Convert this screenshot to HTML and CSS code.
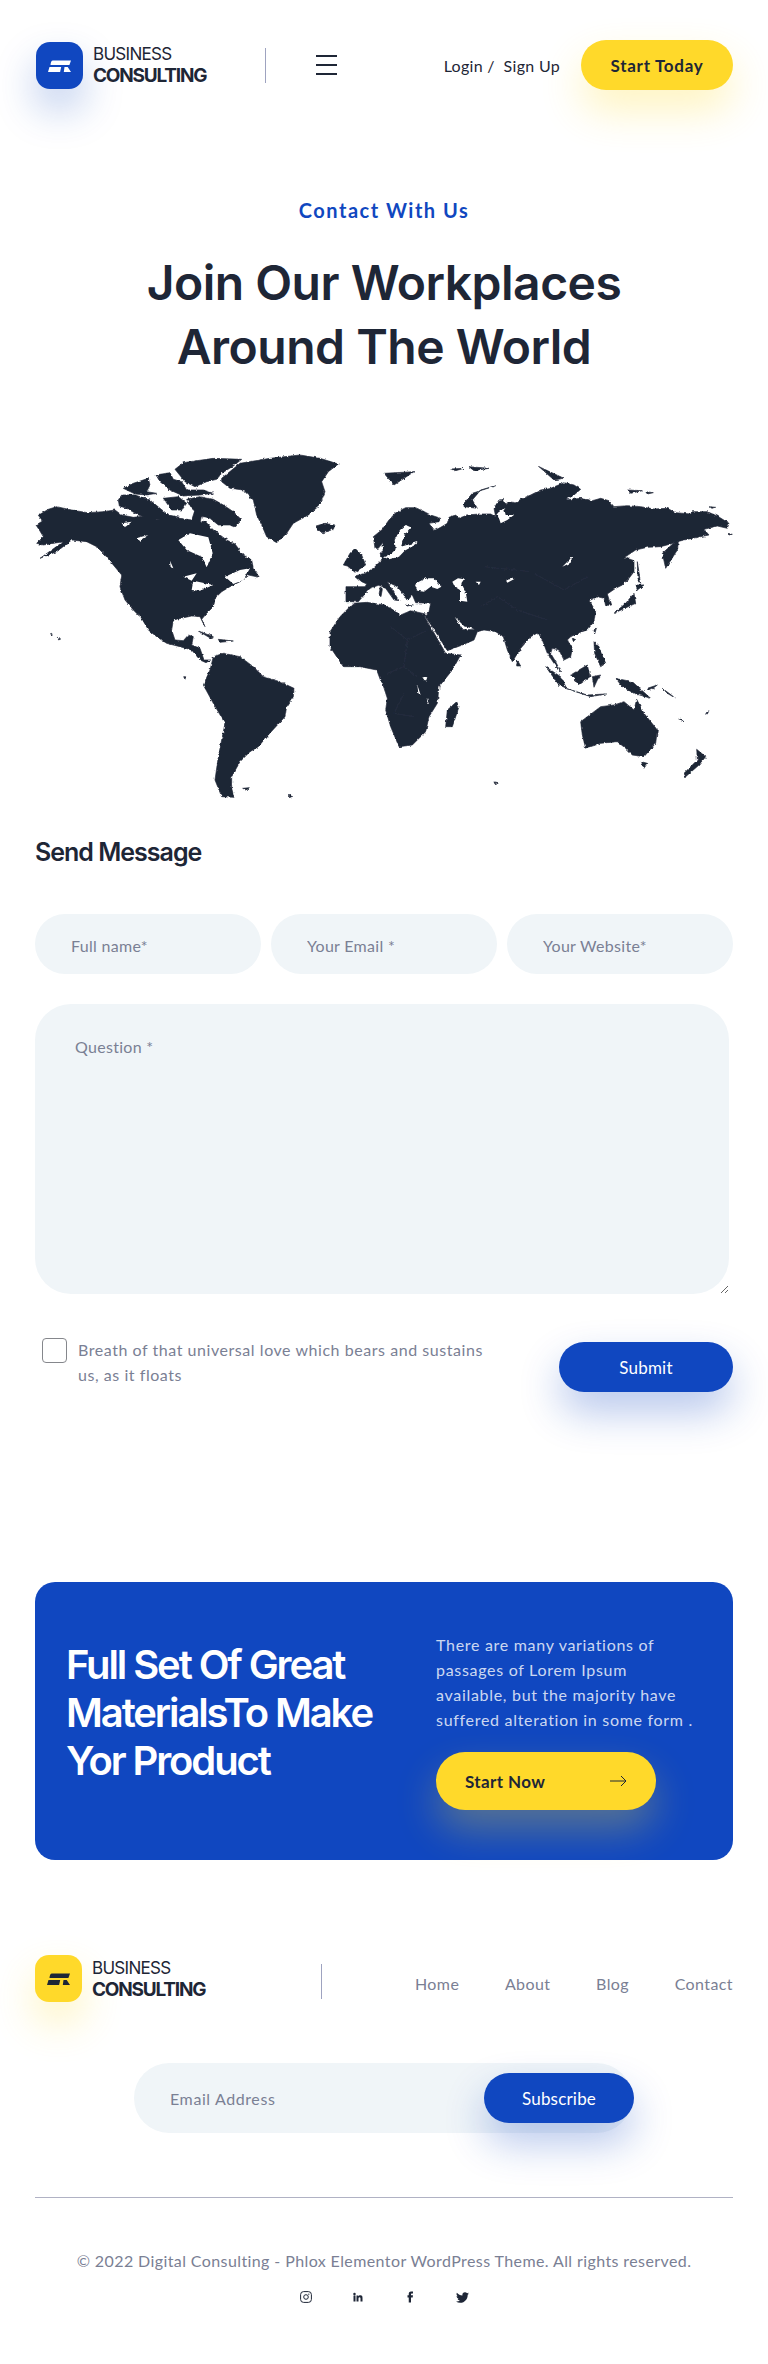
FILE: index.html
```html
<!DOCTYPE html>
<html lang="en">
<head>
  <meta charset="UTF-8" />
  <title>Business Consulting - Contact</title>
  <link rel="stylesheet" href="styles.css">
</head>
<body>

<header class="top-bar">
  <a class="brand" href="#">
    <span class="brand-icon">
      <svg width="47" height="47" viewBox="0 0 47 47"><path d="M17 18.500h18l-1.600 4.600H14.500c.2-2.600.8-4.600 2.500-4.600zM13.500 25h11.700l-1.100 5H12zM28.500 25h3.200l3.300 5h-7.200z" fill="#fff"/></svg>
    </span>
    <span class="brand-text"><span class="brand-top">BUSINESS</span><span class="brand-bottom">CONSULTING</span></span>
  </a>
  <span class="divider"></span>
  <button class="menu-btn" aria-label="Menu"><span></span><span></span><span></span></button>
  <div class="top-links">Login /&nbsp; Sign Up</div>
  <a class="btn btn-yellow btn-top" href="#">Start Today</a>
</header>

<main class="page">
  <p class="eyebrow">Contact With Us</p>
  <h1 class="title">Join Our Workplaces<br>Around The World</h1>

  <svg class="world-map" viewBox="35 452 698 350" aria-label="World map">
    <defs>
      <filter id="coast" filterUnits="userSpaceOnUse" x="30" y="446" width="708" height="362">
        <feTurbulence type="fractalNoise" baseFrequency="0.3" numOctaves="2" seed="4"/>
        <feDisplacementMap in="SourceGraphic" scale="3" xChannelSelector="R" yChannelSelector="G"/>
        <feGaussianBlur stdDeviation="0.4"/>
      </filter>
    </defs>
    <g filter="url(#coast)">
    <g transform="translate(0 440) scale(.33333)">
      <g class="land">
        <path d="M108 255L128 243 115 226 145 208 170 200 215 210 262 218 310 215 345 210 365 225 400 232 455 226 470 240 510 228 540 235 575 240 585 210 605 225 600 250 612 240 640 270 680 300 705 312 730 345 755 360 760 385 778 412 745 405 720 425 690 440 665 455 645 475 640 500 620 520 605 538 615 560 600 530 575 528 520 540 515 570 525 600 550 602 565 585 580 590 575 615 600 625 612 660 632 660 618 668 600 660 575 630 540 620 500 610 470 590 445 570 420 530 400 510 375 480 360 440 365 405 340 375 315 345 290 320 260 305 215 300 170 335 120 355 155 330 190 305 130 315 110 310 130 290 118 270z"/>
        <path d="M525 88L550 68 640 55 725 58 700 78 665 100 650 118 620 125 585 140 555 125zM468 105L510 98 520 118 545 125 560 150 610 150 640 160 600 165 550 168 510 150 480 125zM370 145L400 130 445 115 450 135 440 155 470 160 440 165 405 162zM355 180L365 165 405 165 450 180 480 205 505 225 540 232 500 240 455 238 415 225 380 205 358 198zM490 175L535 170 560 190 545 210 515 210zM560 178L600 170 640 178 670 195 700 215 725 240 705 262 690 255 655 255 630 235 600 228 575 205zM575 255L610 250 625 270 590 280z"/>
        <path d="M665 115L720 70 810 55 900 45 960 55 1015 72 985 95 965 125 975 155 960 195 925 225 880 250 860 280 830 308 800 290 785 255 770 225 760 180 730 150 690 145 665 125zM948 258L975 250 1005 255 1000 268 970 278 955 272z"/>
        <path d="M640 650L670 640 720 650 760 680 790 710 840 725 882 745 880 770 860 800 855 830 800 890 775 920 750 935 720 965 695 1010 695 1045 702 1072 665 1070 645 1020 655 950 675 850 640 790 610 735 630 690z"/>
        <path d="M595 573L640 590 632 595zM655 598L700 603 660 607zM728 1045L748 1043 740 1050zM865 1065L878 1070 870 1072zM551 710L557 710 555 718zM172 592L182 597 176 600zM152 580L157 582 154 585z"/>
        <path d="M1030 375L1050 340 1065 325 1085 345 1097 375 1065 397 1042 378zM1120 290L1155 262 1155 300 1135 325 1125 325zM1155 335L1140 340 1145 360 1120 385 1095 400 1065 408 1085 425 1100 432 1095 440 1038 440 1038 485 1075 485 1095 462 1110 445 1135 436 1155 442zM1140 445L1147 448 1143 470 1137 465zM1060 490L1100 487 1155 495 1155 735 1145 730 1130 690 1080 680 1030 680 990 620 990 575 1020 530z"/>
      </g>
      <g class="sea">
        <path d="M535 300L570 280 625 292 638 340 620 382 605 350 560 330zM550 410L590 400 575 422zM580 422L640 435 600 452 575 450zM675 410L720 390 750 385 730 420 700 432zM510 362L520 385 512 382zM408 295L445 285 418 302zM365 250L395 245 375 262zM415 520L445 572 425 545z"/>
      </g>
    </g>
    <g transform="translate(384 440) scale(.33333)">
      <g class="land">
        <path d="M-3 265L15 240 35 218 65 203 95 203 115 212 140 225 170 235 165 245 135 250 150 272 170 262 190 250 195 232 215 225 225 235 250 225 285 222 320 222 335 230 330 205 345 180 358 178 365 195 372 185 395 188 410 178 440 165 470 150 500 145 540 128 570 135 590 148 570 165 545 180 590 175 625 182 650 175 675 182 690 200 730 197 770 200 810 207 850 205 875 218 920 222 925 215 970 215 1000 228 1035 250 1030 265 1000 258 985 262 960 268 975 285 940 292 900 300 880 305 860 312 830 320 790 322 755 330 722 352 750 362 750 395 735 415 715 435 695 445 670 462 680 495 665 497 660 475 640 470 620 480 615 482 635 512 630 545 610 570 585 578 560 590 550 600 565 625 560 650 540 660 525 630 505 625 500 640 515 665 530 695 510 670 490 640 475 600 462 578 440 590 410 625 385 665 370 630 358 590 335 575 300 570 280 575 270 600 235 615 190 632 170 600 145 560 122 528 135 515 140 490 95 488 85 465 70 482 58 462 40 440 10 425 45 482 30 480 5 445-3 442z"/>
        <path d="M-3 495L20 505 50 525 80 512 125 522 122 530 145 570 185 640 230 645 205 690 165 740 160 790 135 830 125 875 85 915 45 920 20 860 5 810 10 775-3 735zM218 785L225 800 205 860 185 860 190 810z"/>
        <path d="M240 190L265 160 335 137 290 150 265 180 280 205 240 200zM0 100L90 95 30 135zM200 87L240 85 215 92zM255 80L315 85 270 92zM465 80L540 115 510 120zM730 150L775 152 740 160zM785 155L808 158 790 162zM975 200L995 202 980 205zM1030 280L1045 283 1035 285zM885 295L880 330 845 385 835 340zM760 365L770 430 762 420zM690 520L725 490 750 460 755 490 700 515zM755 435L780 435 760 450zM630 570L638 562 632 582zM565 595L575 597 568 605zM630 605L645 620 665 670 650 680 632 640zM485 680L530 710 548 745 525 735zM545 745L610 765 665 762 620 770zM560 705L610 675 618 710 585 735zM625 710L650 705 640 720 630 742zM695 715L745 725 800 775 750 760 715 740zM400 660L410 678 398 678zM790 745L820 735 800 750zM885 835L900 845 890 842zM965 820L975 812 970 822zM330 1025L342 1028 332 1031zM65 493L85 495 70 498zM835 745L875 775 850 760z"/>
        <path d="M590 845L650 800 690 795 720 785 750 810 758 778 780 820 820 870 815 910 780 950 745 945 725 925 700 905 650 910 605 925 595 885zM772 965L790 970 780 985zM938 928L965 950 945 975 905 1010 900 1000 940 960z"/>
      </g>
      <g class="sea">
        <path d="M92 432L115 420 125 415 150 415 172 440 160 447 140 440 120 455 100 452zM205 425L222 415 240 418 232 430 245 455 250 485 228 482 228 450 212 440zM275 425L290 425 285 435zM365 420L395 415 370 428zM535 380L565 350 560 368zM0 352L18 345 35 328 32 300 48 270 65 255 80 262 62 285 50 320 100 306 98 312 62 332 45 350 15 358zM340 220L350 250 370 240 390 225 365 225 360 205zM212 530L240 558 272 568 235 568zM115 712L130 712 125 725zM100 735L110 765 103 760zM128 770L135 795 130 790z"/>
      </g>
      <g class="borders">
        <path d="M20 560L70 600 60 680 100 710M70 600L130 570M60 680L10 700M60 760L30 820 90 830M290 500L340 470 400 510 490 540M450 400L540 450 610 410M300 380L440 395"/>
      </g>
    </g>
    </g>
  </svg>

  <h3 class="form-title">Send Message</h3>
  <form class="contact-form">
    <div class="form-row">
      <input class="field" type="text" placeholder="Full name*">
      <input class="field" type="text" placeholder="Your Email *">
      <input class="field" type="text" placeholder="Your Website*">
    </div>
    <textarea class="question" placeholder="Question *"></textarea>
    <div class="agree-row">
      <label class="agree">
        <input type="checkbox">
        <span>Breath of that universal love which bears and sustains us, as it floats</span>
      </label>
      <button class="btn btn-blue btn-submit" type="button">Submit</button>
    </div>
  </form>

  <section class="cta">
    <h2 class="cta-title">Full Set Of Great MaterialsTo Make Yor Product</h2>
    <div class="cta-side">
      <p>There are many variations of passages of Lorem Ipsum available, but the majority have suffered alteration in some form .</p>
      <a class="btn btn-yellow btn-start" href="#">
        Start Now
        <svg width="17" height="12" viewBox="0 0 17 12"><path d="M0 6h16M11 1l5 5-5 5" fill="none" stroke="#1e2636"/></svg>
      </a>
    </div>
  </section>
</main>

<footer class="page foot">
  <div class="foot-top">
    <a class="brand brand-foot" href="#">
      <span class="brand-icon">
        <svg width="47" height="47" viewBox="0 0 47 47"><path d="M17 18.500h18l-1.600 4.600H14.500c.2-2.600.8-4.600 2.500-4.600zM13.500 25h11.700l-1.100 5H12zM28.500 25h3.200l3.300 5h-7.200z" fill="#1e2636"/></svg>
      </span>
      <span class="brand-text"><span class="brand-top">BUSINESS</span><span class="brand-bottom">CONSULTING</span></span>
    </a>
    <span class="divider"></span>
    <nav class="foot-nav">
      <a href="#">Home</a>
      <a href="#">About</a>
      <a href="#">Blog</a>
      <a href="#">Contact</a>
    </nav>
  </div>

  <form class="subscribe">
    <input type="text" placeholder="Email Address">
    <button class="btn btn-blue btn-sub" type="button">Subscribe</button>
  </form>

  <hr class="foot-line">
  <p class="copyright">© 2022 Digital Consulting - Phlox Elementor WordPress Theme. All rights reserved.</p>
  <div class="socials">
    <a href="#"><svg width="12" height="12" viewBox="0 0 12 12"><rect x=".6" y=".6" width="10.800" height="10.800" rx="3" fill="none" stroke="#1e2636" stroke-width="1"/><circle cx="6" cy="6" r="2.300" fill="none" stroke="#1e2636"/><circle cx="8.800" cy="3.200" r=".6" fill="#1e2636"/></svg></a>
    <a href="#"><svg width="12" height="12" viewBox="0 0 24 24"><path d="M4.980 3.500a2.500 2.500 0 11-.02 5 2.500 2.500 0 01.02-5zM3 9h4v12H3zM9 9h3.800v1.700c.6-1 1.900-2 3.800-2 4 0 4.400 2.600 4.400 6V21h-4v-5.600c0-1.400 0-3.100-1.900-3.100s-2.100 1.500-2.100 3V21H9z" fill="#1e2636"/></svg></a>
    <a href="#"><svg width="12" height="12" viewBox="0 0 24 24"><path d="M14 8.500V6.300c0-1 .7-1.300 1.200-1.300H18V1h-3.800C10.600 1 9.500 3.700 9.500 5.800v2.700H7V13h2.500v10H14V13h3.400l.5-4.500z" fill="#1e2636"/></svg></a>
    <a href="#"><svg width="13" height="13" viewBox="0 0 24 24"><path d="M23.953 4.570a10 10 0 01-2.825.775 4.958 4.958 0 002.163-2.723c-.951.555-2.005.959-3.127 1.184a4.920 4.920 0 00-8.384 4.482C7.690 8.095 4.067 6.130 1.640 3.162a4.822 4.822 0 00-.666 2.475c0 1.710.870 3.213 2.188 4.096a4.904 4.904 0 01-2.228-.616v.060a4.923 4.923 0 003.946 4.827 4.996 4.996 0 01-2.212.085 4.936 4.936 0 004.604 3.417 9.867 9.867 0 01-6.102 2.105c-.390 0-.779-.023-1.170-.067a13.995 13.995 0 007.557 2.209c9.053 0 13.998-7.496 13.998-13.985 0-.210 0-.420-.015-.630A9.935 9.935 0 0024 4.590z" fill="#1e2636"/></svg></a>
  </div>
</footer>

</body>
</html>
```

FILE: styles.css
```css
body {
  font-family: 'Lato', sans-serif;
  font-size: 16px;
  margin: 0;
  background: #fff;
  color: #1e2636;
  overflow-x: hidden;
}
a {
  color: inherit;
  text-decoration: none;
}
p {
  margin: 0;
}

/* header */
.top-bar {
  display: flex;
  align-items: center;
  padding: 40px 35px 0 36px;
}
.brand {
  display: flex;
  align-items: center;
  gap: 10px;
  width: 229px;
  flex: none;
}
.brand-icon {
  width: 47px;
  height: 47px;
  border-radius: 14px;
  background: #1047c0;
  box-shadow: 0 20px 40px rgba(16,71,192,0.28);
  flex: none;
}
.brand-icon svg {
  display: block;
}
.brand-text {
  display: flex;
  flex-direction: column;
  font-family: 'Inter', sans-serif;
  line-height: 21px;
}
.brand-top {
  font-size: 17px;
  letter-spacing: -0.7px;
}
.brand-bottom {
  font-size: 19px;
  font-weight: 700;
  letter-spacing: -1.2px;
}
.divider {
  width: 1px;
  height: 35px;
  background: #9ea3c0;
  flex: none;
}
.menu-btn {
  display: flex;
  flex-direction: column;
  gap: 7px;
  width: 21px;
  margin-left: 50px;
  padding: 0;
  border: none;
  background: none;
}
.menu-btn span {
  height: 2px;
  background: #1e2636;
}
.top-links {
  margin-left: auto;
  font-size: 16px;
  letter-spacing: 0.3px;
}
.btn {
  display: flex;
  align-items: center;
  justify-content: center;
  height: 50px;
  border: none;
  border-radius: 25px;
  font-family: inherit;
  font-size: 17px;
}
.btn-yellow {
  background: #ffd92a;
  box-shadow: 0 20px 40px rgba(255,217,42,0.3);
  font-weight: 700;
  letter-spacing: 0.4px;
}
.btn-blue {
  background: #1047c0;
  color: #fff;
  box-shadow: 0 20px 40px rgba(16,71,192,0.3);
  letter-spacing: 0.2px;
}
.btn-top {
  width: 152px;
  margin-left: 21px;
  letter-spacing: 0.7px;
}

/* contact */
.page {
  width: 698px;
  margin-left: 35px;
}
.eyebrow {
  margin-top: 105px;
  font-size: 20px;
  line-height: 30px;
  font-weight: 700;
  letter-spacing: 1.5px;
  color: #1047c0;
  text-align: center;
}
.title {
  margin: 26px 0 0;
  font-family: 'Inter', sans-serif;
  font-size: 48px;
  line-height: 64px;
  font-weight: 600;
  letter-spacing: -0.5px;
  text-align: center;
}
.world-map {
  display: block;
  width: 698px;
  height: 350px;
  margin-top: 73px;
}
.land path {
  fill: #1e2636;
  stroke: #1e2636;
  stroke-width: 2;
  stroke-linejoin: round;
}
.sea path {
  fill: #fff;
}
.borders path {
  fill: none;
  stroke: #2b3446;
  stroke-width: 1.500;
}
.form-title {
  margin: 33px 0 0;
  font-family: 'Inter', sans-serif;
  font-size: 25px;
  line-height: 34px;
  font-weight: 600;
  letter-spacing: -1px;
}
.form-row {
  display: flex;
  gap: 10px;
  margin-top: 45px;
}
.field,
.question,
.subscribe input {
  box-sizing: border-box;
  border: none;
  outline: none;
  background: #f0f5f8;
  font-family: inherit;
  font-size: 16px;
  letter-spacing: 0.3px;
  color: #7a8094;
}
.field::placeholder,
.question::placeholder,
.subscribe input::placeholder {
  color: #7a8094;
  opacity: 1;
}
.field {
  width: 100%;
  min-width: 0;
  height: 60px;
  padding: 2px 36px 0;
  border-radius: 30px;
}
.question {
  display: block;
  width: 694px;
  height: 290px;
  margin-top: 30px;
  padding: 33px 40px;
  border-radius: 36px;
}
.agree-row {
  display: flex;
  justify-content: space-between;
  align-items: flex-start;
  margin-top: 43px;
}
.agree {
  display: flex;
  gap: 11px;
  width: 450px;
  margin-left: 7px;
  line-height: 25px;
  letter-spacing: 0.55px;
  color: #7a8094;
}
.agree input {
  appearance: none;
  box-sizing: border-box;
  width: 25px;
  height: 25px;
  margin: 1px 0 0;
  border: 1.500px solid #85878c;
  border-radius: 4px;
  flex: none;
}
.btn-submit {
  width: 174px;
  margin-top: 5px;
}

/* call to action */
.cta {
  display: flex;
  align-items: center;
  box-sizing: border-box;
  height: 278px;
  margin-top: 190px;
  padding-left: 31px;
  border-radius: 20px;
  background: #1047c0;
  color: #fff;
}
.cta-title {
  width: 340px;
  margin: 0 30px 16px 0;
  flex: none;
  font-family: 'Inter', sans-serif;
  font-size: 40px;
  line-height: 48px;
  font-weight: 600;
  letter-spacing: -2.100px;
}
.cta-side {
  width: 258px;
  flex: none;
}
.cta-side p {
  line-height: 25px;
  letter-spacing: 0.7px;
  color: rgba(255,255,255,0.8);
}
.btn-start {
  justify-content: space-between;
  box-sizing: border-box;
  width: 220px;
  height: 58px;
  margin-top: 20px;
  padding: 0 29px;
  border-radius: 29px;
  color: #1e2636;
}

/* footer */
.foot {
  margin-top: 95px;
}
.foot-top {
  display: flex;
  align-items: center;
}
.brand-foot {
  width: 286px;
}
.brand-foot .brand-icon {
  background: #ffd92a;
  box-shadow: 0 20px 40px rgba(255,217,42,0.3);
}
.foot .divider {
  margin-top: 6px;
}
.foot-nav {
  display: flex;
  justify-content: space-between;
  margin: 9px 0 0 auto;
  width: 318px;
  letter-spacing: 0.4px;
  color: #7a8094;
}
.subscribe {
  display: flex;
  align-items: center;
  width: 498px;
  height: 70px;
  margin: 61px 0 0 99px;
  border-radius: 35px;
  background: #f0f5f8;
}
.subscribe input {
  flex: 1;
  min-width: 0;
  height: 100%;
  padding: 0 36px;
  border-radius: 35px;
  background: none;
  letter-spacing: 0.6px;
}
.btn-sub {
  width: 150px;
  margin-right: -2px;
  flex: none;
}
.foot-line {
  height: 1px;
  margin: 64px 0 0;
  border: none;
  background: #b0b2c4;
}
.copyright {
  margin-top: 51px;
  line-height: 24px;
  letter-spacing: 0.4px;
  color: #7a8094;
  text-align: center;
}
.socials {
  display: flex;
  justify-content: center;
  align-items: center;
  gap: 40px;
  height: 24px;
  margin-top: 12px;
  padding-bottom: 55px;
}
.socials a {
  display: flex;
}
```
